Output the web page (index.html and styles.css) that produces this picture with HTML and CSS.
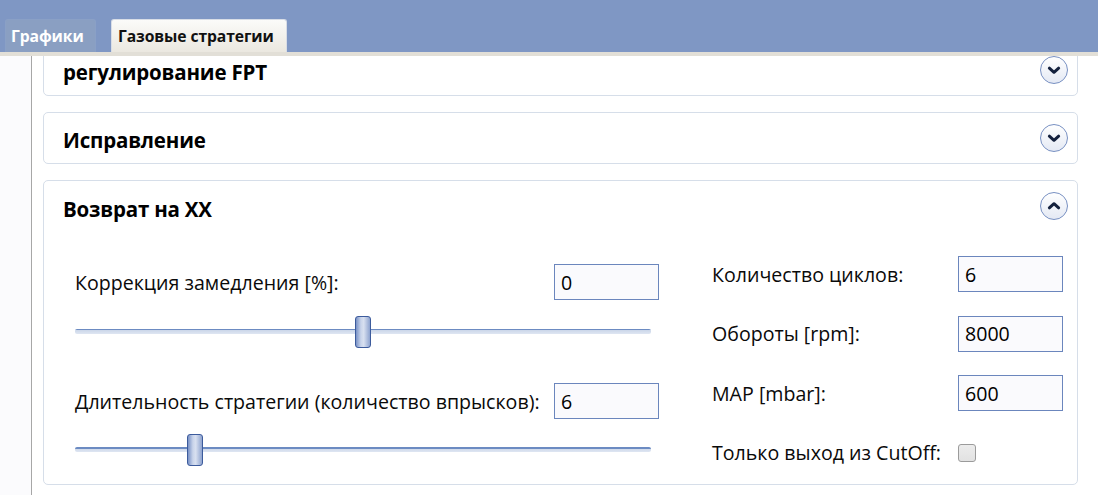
FILE: index.html
```html
<!DOCTYPE html>
<html lang="ru">
<head>
<meta charset="utf-8">
<title>Газовые стратегии</title>
<link rel="stylesheet" href="styles.css">
</head>
<body>
<div class="app">
  <div class="topbar">
    <div class="tab tab-inactive">Графики</div>
    <div class="tab tab-active">Газовые стратегии</div>
  </div>
  <div class="divider"></div>
  <div class="main">
    <div class="side"></div>
    <div class="content">
      <div class="card card-first">
        <div class="card-head">
          <span class="card-title">регулирование FPT</span>
          <span class="toggle"><svg viewBox="0 0 28 28" width="28" height="28"><path d="M9 12 L14 16.5 L19 12" fill="none" stroke="#14213d" stroke-width="3.2" stroke-linecap="round" stroke-linejoin="round"/></svg></span>
        </div>
      </div>
      <div class="card">
        <div class="card-head">
          <span class="card-title">Исправление</span>
          <span class="toggle"><svg viewBox="0 0 28 28" width="28" height="28"><path d="M9 12 L14 16.5 L19 12" fill="none" stroke="#14213d" stroke-width="3.2" stroke-linecap="round" stroke-linejoin="round"/></svg></span>
        </div>
      </div>
      <div class="card card-open">
        <div class="card-head">
          <span class="card-title">Возврат на XX</span>
          <span class="toggle"><svg viewBox="0 0 28 28" width="28" height="28"><path d="M9 16 L14 11.5 L19 16" fill="none" stroke="#14213d" stroke-width="3.2" stroke-linecap="round" stroke-linejoin="round"/></svg></span>
        </div>
        <div class="card-body">
          <div class="left-col">
            <div class="field-row">
              <span class="label">Коррекция замедления [%]:</span>
              <span class="input">0</span>
            </div>
            <div class="slider slider-1">
              <div class="track"></div>
              <div class="thumb" style="left: 280px"></div>
            </div>
            <div class="field-row row-2">
              <span class="label">Длительность стратегии (количество впрысков):</span>
              <span class="input">6</span>
            </div>
            <div class="slider slider-2">
              <div class="track"></div>
              <div class="thumb" style="left: 112px"></div>
            </div>
          </div>
          <div class="right-col">
            <span class="label">Количество циклов:</span>
            <span class="input">6</span>
            <span class="label">Обороты [rpm]:</span>
            <span class="input">8000</span>
            <span class="label">MAP [mbar]:</span>
            <span class="input">600</span>
            <span class="label">Только выход из CutOff:</span>
            <span class="check-cell"><span class="checkbox"></span></span>
          </div>
        </div>
      </div>
    </div>
  </div>
</div>
</body>
</html>
```

FILE: styles.css
```css
html, body {
  margin: 0;
  padding: 0;
}
body {
  width: 1098px;
  height: 495px;
  overflow: hidden;
  font-family: "Open Sans", "Noto Sans", "DejaVu Sans", sans-serif;
  color: #000;
  background: #fff;
}
.app {
  display: flex;
  flex-direction: column;
  height: 495px;
}
.topbar {
  height: 52px;
  background: #7f97c4;
  display: flex;
  align-items: flex-end;
  gap: 15px;
  padding-left: 5px;
  box-sizing: border-box;
}
.tab {
  height: 33px;
  box-sizing: border-box;
  display: flex;
  align-items: center;
  font-size: 15.7px;
  font-weight: 700;
  border-radius: 3px 3px 0 0;
  letter-spacing: -0.1px;
}
.tab-inactive {
  width: 91px;
  padding-left: 5px;
  background: #8a9fc2;
  color: #fff;
  border: 1px solid #8aa0c6;
  border-bottom: none;
}
.tab-active {
  width: 176px;
  padding-left: 6px;
  background: linear-gradient(#fbfbf9, #ebe8e0);
  color: #111;
  border: 1px solid #d8dde6;
  border-bottom: none;
}
.divider {
  height: 4px;
  background: #e2dfd7;
}
.main {
  flex: 1;
  display: flex;
  min-height: 0;
  overflow: hidden;
}
.side {
  width: 31px;
  background: #fbfbfd;
  border-right: 1px solid #a7a7a7;
}
.content {
  flex: 1;
  padding: 0 20px 0 11px;
  display: flex;
  flex-direction: column;
  gap: 16px;
}
.card {
  border: 1px solid #d6dee9;
  border-radius: 5px;
  background: #fff;
}
.card-first {
  margin-top: -12px;
}
.card-open {
  height: 305px;
  box-sizing: border-box;
}
.card-head {
  height: 50px;
  display: flex;
  align-items: center;
  justify-content: space-between;
  padding: 0 9px 0 19px;
}
.card-title {
  font-size: 20.5px;
  font-weight: 700;
  letter-spacing: -0.2px;
  margin-top: 4px;
}
.toggle {
  width: 28px;
  height: 28px;
  box-sizing: border-box;
  border: 1.5px solid #7890c2;
  border-radius: 50%;
  background: linear-gradient(#ffffff, #e4e9f4);
  display: flex;
  align-items: center;
  justify-content: center;
}
.toggle svg {
  width: 26px;
  height: 26px;
}
.card-open .card-head {
  height: 52px;
}
.card-open .toggle {
  margin-top: -2px;
}
.card-body {
  display: flex;
  padding: 23px 0 0 31px;
  gap: 53px;
}
.left-col {
  width: 584px;
  margin-top: 8px;
  display: flex;
  flex-direction: column;
}
.field-row {
  display: flex;
  justify-content: space-between;
  align-items: center;
  height: 36px;
}
.label {
  font-size: 19.6px;
  color: #0a0a0a;
  white-space: nowrap;
}
.input {
  width: 105px;
  height: 36px;
  box-sizing: border-box;
  border: 1.5px solid #6b86bd;
  background: #fafafd;
  font-size: 19.6px;
  padding-left: 6px;
  display: flex;
  align-items: center;
}
.slider {
  position: relative;
  height: 32px;
  width: 576px;
}
.slider-1 {
  margin-top: 16px;
}
.row-2 {
  margin-top: 35px;
}
.slider-2 {
  margin-top: 15px;
}
.track {
  position: absolute;
  left: 0;
  right: 0;
  top: 13px;
  height: 5px;
  border-radius: 2px;
  background: linear-gradient(#6c8bc2 0, #6c8bc2 1.5px, #cdd8ea 1.5px, #dfe6f2 100%);
}
.thumb {
  position: absolute;
  top: 0;
  width: 16px;
  height: 32px;
  box-sizing: border-box;
  border: 1.5px solid #3c5b9c;
  border-radius: 3px;
  background: linear-gradient(90deg, #7891c6 0%, #c9d4ea 35%, #d8e0f0 55%, #8ea3cf 100%);
}
.right-col {
  display: grid;
  grid-template-columns: 246px 105px;
  grid-auto-rows: 36px;
  row-gap: 23.5px;
  align-items: center;
}
.check-cell {
  display: flex;
  align-items: center;
}
.checkbox {
  width: 18px;
  height: 18px;
  box-sizing: border-box;
  border: 1px solid #9b9b9b;
  border-radius: 3px;
  background: linear-gradient(#ececec, #e2e2e2);
}
```
